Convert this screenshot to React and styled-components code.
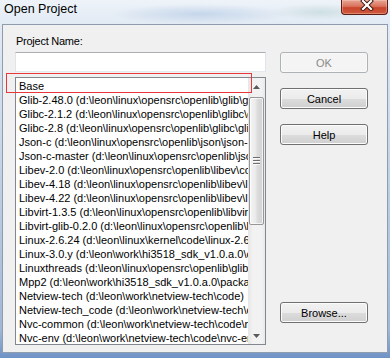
import React from "react";
import styled, { createGlobalStyle } from "styled-components";

const GlobalStyle = createGlobalStyle`
  * { box-sizing: border-box; }
  body {
    margin: 0;
    font-family: "Liberation Sans", Arial, sans-serif;
    background: #dfe8f2;
  }
`;

const projects = [
  "Base",
  "Glib-2.48.0 (d:\\leon\\linux\\opensrc\\openlib\\glib\\glib-2.48.0)",
  "Glibc-2.1.2 (d:\\leon\\linux\\opensrc\\openlib\\glibc\\glibc-2.1.2)",
  "Glibc-2.8 (d:\\leon\\linux\\opensrc\\openlib\\glibc\\glibc-2.8)",
  "Json-c (d:\\leon\\linux\\opensrc\\openlib\\json\\json-c)",
  "Json-c-master (d:\\leon\\linux\\opensrc\\openlib\\json\\json-c-master)",
  "Libev-2.0 (d:\\leon\\linux\\opensrc\\openlib\\libev\\code\\libev-2.0)",
  "Libev-4.18 (d:\\leon\\linux\\opensrc\\openlib\\libev\\libev-4.18)",
  "Libev-4.22 (d:\\leon\\linux\\opensrc\\openlib\\libev\\libev-4.22)",
  "Libvirt-1.3.5 (d:\\leon\\linux\\opensrc\\openlib\\libvirt\\libvirt-1.3.5)",
  "Libvirt-glib-0.2.0 (d:\\leon\\linux\\opensrc\\openlib\\libvirt\\libvirt-glib)",
  "Linux-2.6.24 (d:\\leon\\linux\\kernel\\code\\linux-2.6.24)",
  "Linux-3.0.y (d:\\leon\\work\\hi3518_sdk_v1.0.a.0\\osdrv\\kernel)",
  "Linuxthreads (d:\\leon\\linux\\opensrc\\openlib\\glibc\\linuxthreads)",
  "Mpp2 (d:\\leon\\work\\hi3518_sdk_v1.0.a.0\\package\\mpp2)",
  "Netview-tech (d:\\leon\\work\\netview-tech\\code)",
  "Netview-tech_code (d:\\leon\\work\\netview-tech\\code\\netview)",
  "Nvc-common (d:\\leon\\work\\netview-tech\\code\\nvc-common)",
  "Nvc-env (d:\\leon\\work\\netview-tech\\code\\nvc-env)",
];

const Window = styled.div`
  position: relative;
  width: 390px;
  height: 358px;
  display: flex;
  flex-direction: column;
  overflow: hidden;
  background:
    radial-gradient(ellipse 90px 10px at 200px 14px, rgba(170, 195, 225, 0.55), transparent),
    radial-gradient(ellipse 50px 8px at 320px 12px, rgba(175, 205, 200, 0.45), transparent),
    linear-gradient(180deg, #eef3f9 0px, #e2eaf4 24px, #bccde2 200px, #9fb7d6 330px, #6f92c6 358px);
`;

const TitleBar = styled.div`
  flex: none;
  height: 24px;
  display: flex;
  align-items: flex-start;
  padding: 0 2px 0 4px;
`;

const Title = styled.span`
  padding-top: 2px;
  font-size: 12.5px;
  line-height: 15px;
  color: #000;
`;

const CloseButton = styled.div`
  margin-left: auto;
  width: 47px;
  height: 15px;
  display: flex;
  justify-content: center;
  padding-left: 4px;
  border: 1px solid #5a1d12;
  border-top: none;
  border-radius: 0 0 4px 4px;
  background: linear-gradient(180deg, #e8a595 0%, #d9735d 45%, #c9452c 55%, #d0593f 100%);
  box-shadow: inset 0 0 0 1px rgba(255, 220, 210, 0.35);
`;

const Client = styled.div`
  flex: 1;
  display: flex;
  margin: 0 2px 5px 2px;
  padding-left: 12px;
  border: 1px solid #8f9cad;
  background: #f0f0f0;
`;

const LeftColumn = styled.div`
  width: 251px;
  display: flex;
  flex-direction: column;
  padding: 10px 0 7px;
`;

const Label = styled.div`
  font-size: 11px;
  line-height: 13px;
  letter-spacing: -0.25px;
  margin: 0 0 4px 1px;
  color: #000;
`;

const TextInput = styled.div`
  height: 20px;
  background: #fff;
  border: 1px solid #e2e3ea;
  border-top-color: #abadb3;
  border-bottom-color: #e3e9ef;
  margin-bottom: 5px;
`;

const ListBox = styled.div`
  height: 268px;
  display: flex;
  background: #fff;
  border: 1px solid #828790;
`;

const Rows = styled.div`
  flex: 1;
  min-width: 0;
  overflow: hidden;
  padding-top: 1px;
`;

const Row = styled.div`
  height: 14px;
  line-height: 14px;
  padding-left: 3px;
  font-size: 11px;
  white-space: nowrap;
  color: #000;
`;

const ScrollBar = styled.div`
  width: 17px;
  display: flex;
  flex-direction: column;
  background: linear-gradient(90deg, #e6e6e6 0%, #f2f2f2 30%, #f2f2f2 80%, #e9e9e9 100%);
`;

const ArrowButton = styled.div`
  height: 17px;
  flex: none;
  display: flex;
  align-items: center;
  justify-content: center;
`;

const Track = styled.div`
  flex: 1;
  padding: 2px 1px 0;
`;

const Thumb = styled.div`
  height: 128px;
  display: flex;
  flex-direction: column;
  align-items: center;
  justify-content: center;
  gap: 1px;
  border: 1px solid #979797;
  border-radius: 2px;
  background: linear-gradient(90deg, #f5f5f5 0%, #e9e9e9 45%, #dcdcdc 55%, #d2d2d2 100%);
  box-shadow: inset 0 0 0 1px rgba(255, 255, 255, 0.7);
`;

const Grip = styled.span`
  width: 7px;
  height: 1px;
  background: #6d6d6d;
  box-shadow: 0 1px 0 #fafafa;
  margin-bottom: 1px;
`;

const RightColumn = styled.div`
  width: 88px;
  margin-left: 14px;
  display: flex;
  flex-direction: column;
  gap: 15px;
  padding: 27px 0 29px;
`;

const Button = styled.div`
  height: 21px;
  flex: none;
  display: flex;
  align-items: center;
  justify-content: center;
  font-size: 11px;
  color: ${(p) => (p.$disabled ? "#8a8a8a" : "#000")};
  border: 1px solid ${(p) => (p.$disabled ? "#adb2b5" : "#707070")};
  border-radius: 3px;
  background: ${(p) =>
    p.$disabled
      ? "#f4f4f4"
      : "linear-gradient(180deg, #f2f2f2 0%, #ebebeb 50%, #dddddd 50%, #cfcfcf 100%)"};
  box-shadow: inset 0 0 0 1px ${(p) => (p.$disabled ? "#f9f9f9" : "#fcfcfc")};
  margin-top: ${(p) => (p.$bottom ? "auto" : "0")};
`;

const Highlight = styled.div`
  position: absolute;
  left: 6px;
  top: 73px;
  width: 246px;
  height: 20px;
  border: 1px solid #e8383b;
  pointer-events: none;
`;

const CloseGlyph = () => (
  <svg width="14" height="11" viewBox="0 0 14 11">
    <path d="M3 1 L11 9 M11 1 L3 9" stroke="#3a1410" strokeWidth="4" strokeLinecap="square" />
    <path d="M3 1 L11 9 M11 1 L3 9" stroke="#fff" strokeWidth="2.2" strokeLinecap="square" />
  </svg>
);

const Arrow = ({ down }) => (
  <svg width="7" height="4" viewBox="0 0 7 4">
    <path d={down ? "M0 0 H7 L3.5 4 Z" : "M0 4 H7 L3.5 0 Z"} fill="#5a5a5a" />
  </svg>
);

export default function App() {
  return (
    <>
      <GlobalStyle />
      <Window>
        <TitleBar>
          <Title>Open Project</Title>
          <CloseButton>
            <CloseGlyph />
          </CloseButton>
        </TitleBar>
        <Client>
          <LeftColumn>
            <Label>Project Name:</Label>
            <TextInput />
            <ListBox>
              <Rows>
                {projects.map((name) => (
                  <Row key={name}>{name}</Row>
                ))}
              </Rows>
              <ScrollBar>
                <ArrowButton>
                  <Arrow />
                </ArrowButton>
                <Track>
                  <Thumb>
                    <Grip />
                    <Grip />
                    <Grip />
                  </Thumb>
                </Track>
                <ArrowButton>
                  <Arrow down />
                </ArrowButton>
              </ScrollBar>
            </ListBox>
          </LeftColumn>
          <RightColumn>
            <Button $disabled>OK</Button>
            <Button>Cancel</Button>
            <Button>Help</Button>
            <Button $bottom>Browse...</Button>
          </RightColumn>
        </Client>
        <Highlight />
      </Window>
    </>
  );
}
